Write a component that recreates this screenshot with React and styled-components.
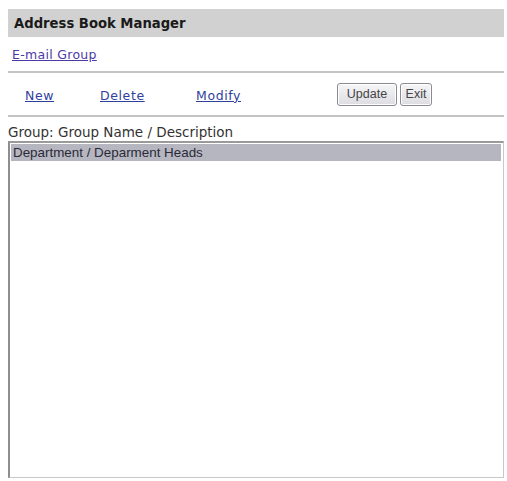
import React, { useState } from "react";
import styled, { createGlobalStyle } from "styled-components";

const GlobalStyle = createGlobalStyle`
  html, body {
    margin: 0;
    padding: 0;
    background: #fff;
  }
  body {
    font-family: "DejaVu Sans", Verdana, sans-serif;
    color: #222;
  }
`;

const Page = styled.div`
  width: 496px;
  padding: 9px 3px 0 8px;
  display: flex;
  flex-direction: column;
`;

const TitleBar = styled.div`
  height: 28px;
  background: #d1d1d1;
  display: flex;
  align-items: center;
  padding-left: 6px;
  font-size: 13.2px;
  font-weight: bold;
  color: #1a1a1a;
`;

const GroupLinkRow = styled.div`
  height: 27px;
  padding: 7px 0 0 4px;
  border-bottom: 2px solid #c4c4c4;
`;

const Link = styled.a`
  color: ${(p) => (p.$visited ? "#4a3aa8" : "#2f3f9c")};
  text-decoration: underline;
  font-size: 12.5px;
  cursor: pointer;
  letter-spacing: ${(p) => p.$spaced || "0"};
`;

const ActionRow = styled.div`
  height: 42px;
  display: flex;
  align-items: center;
  border-bottom: 2px solid #c4c4c4;
`;

const Actions = styled.div`
  display: flex;
  align-items: center;
  padding-left: 17px;
  width: 312px;
`;

const ActionCell = styled.div`
  width: ${(p) => p.$w}px;
`;

const Buttons = styled.div`
  display: flex;
  gap: 3px;
  align-items: center;
`;

const Button = styled.button`
  height: 23px;
  width: ${(p) => p.$w}px;
  padding: 0;
  font-family: "Liberation Sans", Arial, sans-serif;
  font-size: 12.5px;
  color: #444;
  background: linear-gradient(#f6f6f8, #dcdce2);
  border: 1px solid #8a8a92;
  border-radius: 3px;
  box-shadow: inset 0 0 0 1px #fff;
`;

const Label = styled.div`
  margin-top: 7px;
  font-size: 13.5px;
  color: #333;
  height: 17px;
  line-height: 17px;
`;

const ListBox = styled.div`
  height: 333px;
  border: 1px solid #c8c8c8;
  border-left: 2px solid #8e8e8e;
  border-top: 2px solid #9a9a9a;
  background: #fff;
  padding: 1px 2px 0 1px;
`;

const Item = styled.div`
  height: 17px;
  line-height: 17px;
  padding-left: 2px;
  font-family: "Liberation Sans", Arial, sans-serif;
  font-size: 13.4px;
  color: #2a2a38;
  background: ${(p) => (p.$selected ? "#b6b6c0" : "transparent")};
`;

export default function App() {
  const [selected, setSelected] = useState(0);
  const groups = ["Department / Deparment Heads"];

  return (
    <>
      <GlobalStyle />
      <Page>
        <TitleBar>Address Book Manager</TitleBar>
        <GroupLinkRow>
          <Link $visited $spaced="0.3px">E-mail Group</Link>
        </GroupLinkRow>
        <ActionRow>
          <Actions>
            <ActionCell $w={75}>
              <Link $spaced="0.6px">New</Link>
            </ActionCell>
            <ActionCell $w={96}>
              <Link $spaced="0.6px">Delete</Link>
            </ActionCell>
            <ActionCell>
              <Link $spaced="0.6px">Modify</Link>
            </ActionCell>
          </Actions>
          <Buttons>
            <Button $w={60}>Update</Button>
            <Button $w={32}>Exit</Button>
          </Buttons>
        </ActionRow>
        <Label>Group: Group Name / Description</Label>
        <ListBox>
          {groups.map((g, i) => (
            <Item key={g} $selected={selected === i} onClick={() => setSelected(i)}>
              {g}
            </Item>
          ))}
        </ListBox>
      </Page>
    </>
  );
}
